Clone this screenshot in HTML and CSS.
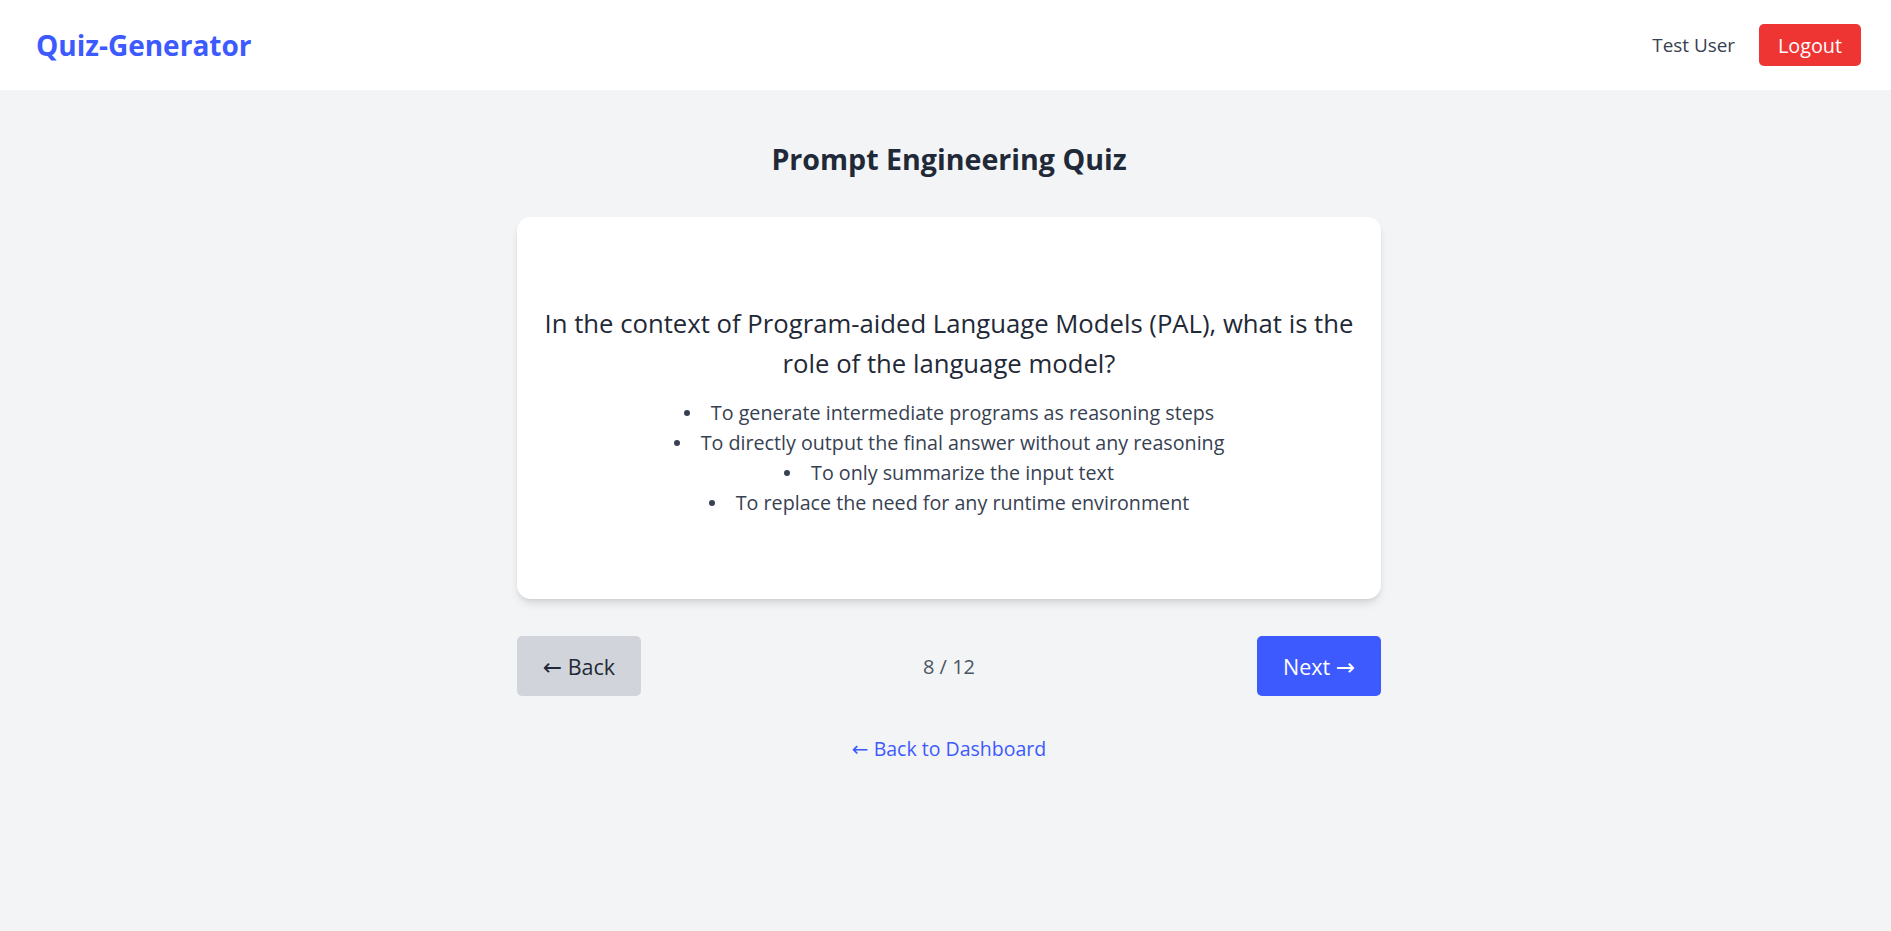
FILE: index.html
```html
<!DOCTYPE html>
<html lang="en">
<head>
<meta charset="utf-8">
<title>Quiz-Generator</title>
<link rel="stylesheet" href="styles.css">
</head>
<body>
<header class="topbar">
  <div class="brand">Quiz-Generator</div>
  <div class="user-area">
    <span class="user-name">Test User</span>
    <button class="btn btn-logout">Logout</button>
  </div>
</header>
<div class="page">
  <main class="quiz">
    <h1 class="quiz-title">Prompt Engineering Quiz</h1>
    <section class="card">
      <h2 class="question">In the context of Program-aided Language Models (PAL), what is the role of the language model?</h2>
      <ul class="options">
        <li class="option">To generate intermediate programs as reasoning steps</li>
        <li class="option">To directly output the final answer without any reasoning</li>
        <li class="option">To only summarize the input text</li>
        <li class="option">To replace the need for any runtime environment</li>
      </ul>
    </section>
    <div class="nav-row">
      <button class="btn btn-back"><span class="arrow">←</span> Back</button>
      <span class="progress">8 / 12</span>
      <button class="btn btn-next">Next <span class="arrow">→</span></button>
    </div>
    <a class="dash-link" href="#"><span class="arrow arrow-sm">←</span> Back to Dashboard</a>
  </main>
</div>
</body>
</html>
```
FILE: styles.css
```css
* { box-sizing: border-box; }
html, body { margin: 0; padding: 0; }
body {
  background: #f3f4f6;
  font-family: "Open Sans", "Noto Sans", sans-serif;
  color: #1f2937;
  min-height: 931px;
}
.topbar {
  height: 90px;
  background: #ffffff;
  display: flex;
  align-items: center;
  justify-content: space-between;
  padding: 0 30px 0 36px;
}
.brand {
  font-size: 28px;
  font-weight: 700;
  color: #3d5afe;
}
.user-area {
  display: flex;
  align-items: center;
  gap: 24px;
}
.user-name {
  font-size: 18.9px;
  color: #374151;
}
.btn {
  border: none;
  font-family: inherit;
  cursor: pointer;
  border-radius: 5px;
  padding: 0;
}
.btn-logout {
  width: 102px;
  height: 42px;
  background: #ef3434;
  color: #ffffff;
  font-size: 19.8px;
}
.page {
  padding-left: 7px;
}
.quiz {
  width: 864px;
  margin: 0 auto;
  padding-top: 49px;
  display: flex;
  flex-direction: column;
  align-items: stretch;
}
.quiz-title {
  margin: 0;
  text-align: center;
  font-size: 28.6px;
  line-height: 40px;
  font-weight: 700;
  color: #1f2937;
}
.card {
  margin-top: 38px;
  height: 382px;
  background: #ffffff;
  border-radius: 14px;
  box-shadow: 0 6px 10px -2px rgba(0,0,0,0.12), 0 2px 5px -2px rgba(0,0,0,0.1);
  padding: 5px 17px 0;
  display: flex;
  flex-direction: column;
  justify-content: center;
  text-align: center;
}
.question {
  margin: 0 0 13px;
  font-size: 25.7px;
  line-height: 40.5px;
  font-weight: 400;
  color: #1f2937;
}
.options {
  margin: 0;
  padding: 0;
  list-style: none;
  font-size: 19.7px;
  line-height: 30px;
  color: #374151;
}
.option::before {
  content: "";
  display: inline-block;
  width: 6px;
  height: 6px;
  border-radius: 50%;
  background: currentColor;
  vertical-align: middle;
  margin: -2px 21px 0 0;
}
.arrow {
  font-family: "DejaVu Sans", sans-serif;
  font-size: 23px;
}
.arrow-sm {
  font-size: 20px;
}
.nav-row {
  margin-top: 37px;
  display: flex;
  align-items: center;
  justify-content: space-between;
}
.btn-back, .btn-next {
  width: 124px;
  height: 60px;
  font-size: 21.5px;
}
.btn-back {
  background: #d1d5db;
  color: #1f2937;
}
.btn-next {
  background: #3d5afe;
  color: #ffffff;
}
.progress {
  font-size: 20px;
  color: #4b5563;
}
.dash-link {
  margin-top: 39px;
  align-self: center;
  font-size: 19.5px;
  color: #3d5afe;
  text-decoration: none;
}
```
